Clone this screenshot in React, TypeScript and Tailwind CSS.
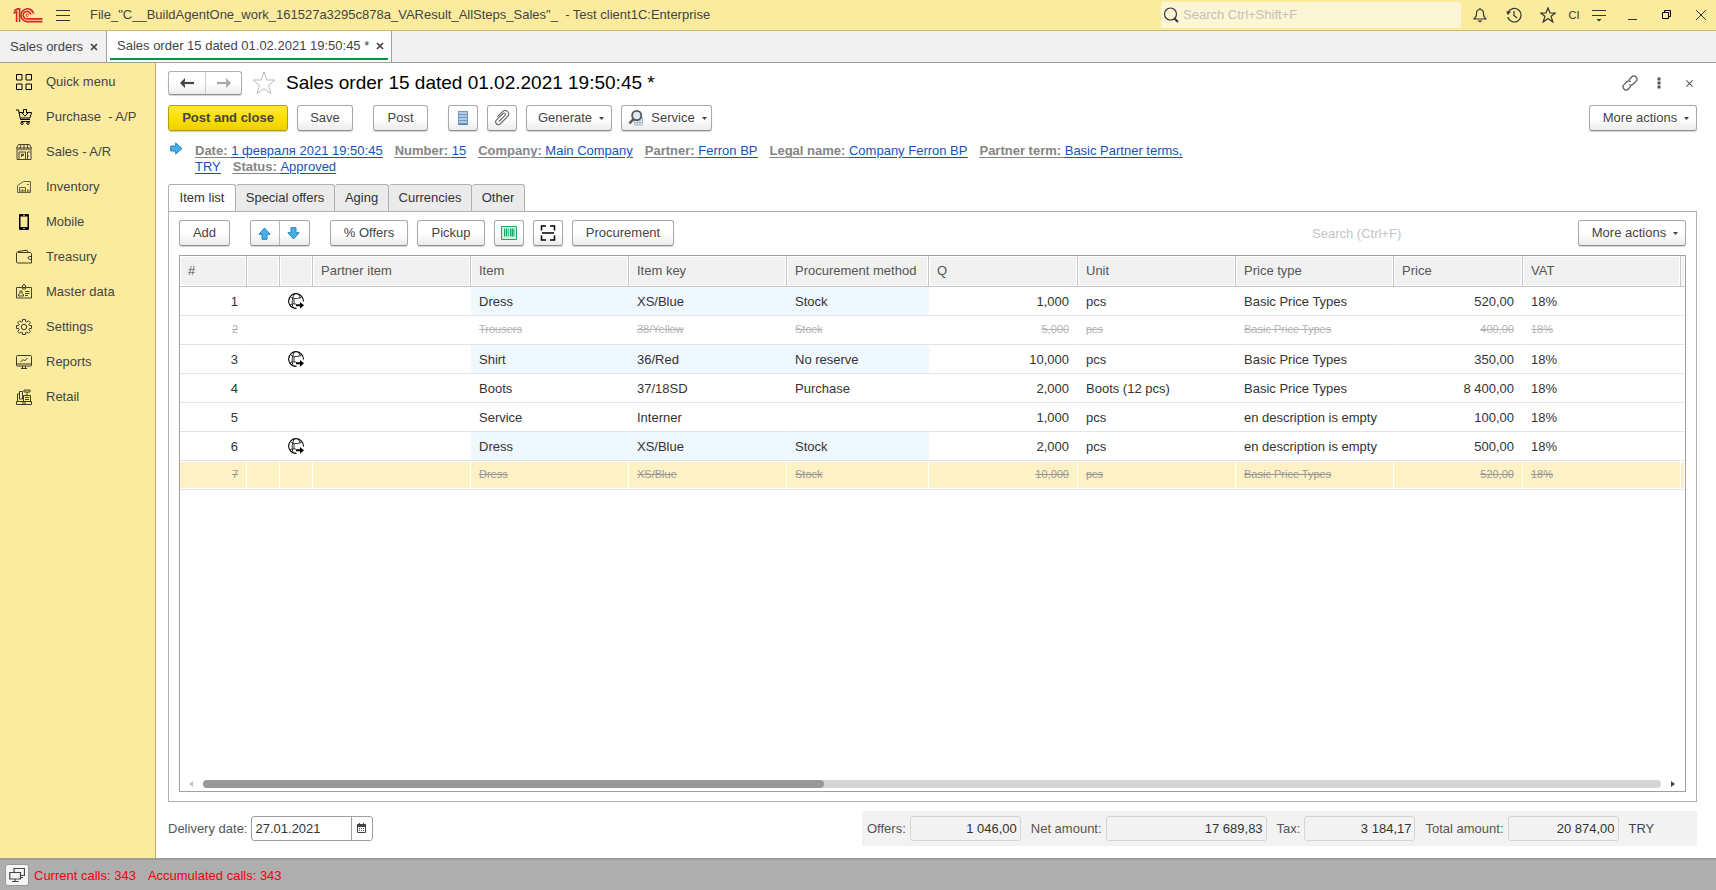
import type { ReactNode } from "react";

type IconProps = { children: ReactNode; className?: string; box?: string };

function Icon({ children, className = "size-4", box = "0 0 16 16" }: IconProps) {
  return (
    <svg
      viewBox={box}
      className={`${className} shrink-0`}
      fill="none"
      stroke="currentColor"
      strokeWidth="1"
      aria-hidden="true"
    >
      {children}
    </svg>
  );
}

function Logo() {
  return (
    <Icon box="0 0 30 15" className="h-[15px] w-[30px] text-[#dd2025]">
      <g strokeWidth="1.6">
        <path d="M0.5 5.2 3.6 3.4V14" />
        <path d="M1 2.6 4.6 0.9H6.6V14" />
        <path d="M20.6 5.6A6.4 6.4 0 1 0 14.8 13.6H29.5" />
        <path d="M17.8 6.4A3.8 3.8 0 1 0 14.8 10.9H29.5" />
        <path d="M16 7.2A1.4 1.4 0 1 0 14.8 8.6" strokeWidth="1" />
      </g>
    </Icon>
  );
}

const sections: { label: string; icon: ReactNode }[] = [
  {
    label: "Quick menu",
    icon: (
      <Icon className="size-4 text-black">
        <path d="M.5.5h5.500v5.500H.5zM10 .5h5.500v5.500H10zM.5 10h5.500v5.500H.5zM10 10h5.500v5.500H10z" />
      </Icon>
    ),
  },
  {
    label: "Purchase\u00a0 - A/P",
    icon: (
      <Icon className="size-4 text-black">
        <path d="M0 1h2.500l2 9.500h9.500M3 3.500h3.500M10.500 3.500H15.500L14 9H4.500M5 12.500h9" />
        <path d="M7.500.5h3v3.500h1.500L9 7.200 6 4h1.500z" />
        <circle cx="6" cy="14.200" r="1.200" />
        <circle cx="12" cy="14.200" r="1.200" />
      </Icon>
    ),
  },
  {
    label: "Sales - A/R",
    icon: (
      <Icon className="size-4 text-[#4a4530]">
        <path d="M2.500.5h11l2 3.500H.5zM5 .5 4.200 4M8 .5V4M11 .5l.8 3.500" />
        <path d="M.5 4c0 2.400 3.700 2.400 3.700 0 0 2.400 3.800 2.400 3.800 0 0 2.400 3.800 2.400 3.800 0 0 2.400 3.700 2.400 3.700 0" />
        <path d="M1 5.500v10h14v-10M3 8h6.500v7.500M3 8v7.500M11.500 15.500V8H14M5.500 13v-3h2v1.500h-2M12 12h1" />
      </Icon>
    ),
  },
  {
    label: "Inventory",
    icon: (
      <Icon className="size-4 text-[#6b6440]">
        <path d="M1.500 13.500v-7l6-4h7v11zM3.500 13.500V8.500h6v5M5 13.500v-3M6.500 13.500v-3M8 13.500v-3M11 5.500h2M11.500 13.500v-3M13 13.500v-3" />
      </Icon>
    ),
  },
  {
    label: "Mobile",
    icon: (
      <Icon className="size-4 text-black">
        <rect x="3" y="0" width="10" height="16" rx="1" fill="currentColor" stroke="none" />
        <path d="M4.500 2.500h7v10.500h-7z" fill="#fbeb9e" stroke="none" />
        <path d="M7 1.200h2M7 14.500h2" stroke="#fbeb9e" strokeWidth=".8" />
      </Icon>
    ),
  },
  {
    label: "Treasury",
    icon: (
      <Icon className="size-4 text-[#3d3a28]">
        <path d="M2 3.500h12.500l1 1v9.500H1.500l-1-1V3.800C1 3 2 2.500 3 2.300L11 1.200l1 2" />
        <path d="M15.500 7.500h-2a1.300 1.300 0 0 0 0 2.800h2" />
      </Icon>
    ),
  },
  {
    label: "Master data",
    icon: (
      <Icon className="size-4 text-[#4a4530]">
        <path d="M.5 3.500h15v10.500H.5zM6.500 3.500V2a1.500 1.500 0 0 1 3 0v3h-3zM9 7.500h4.500M9 9.500h4.500M9 11.500h3" />
        <path d="M2.500 12V10.500L4 9.500V7h2v2.500l1.500 1V12z" />
      </Icon>
    ),
  },
  {
    label: "Settings",
    icon: (
      <Icon className="size-4 text-[#3d3a28]">
        <path
          d="M6.500 2.500V.5h3v2l1.300.6 1.500-1.400 2.100 2.100-1.500 1.500.6 1.200h2v3h-2l-.6 1.300 1.500 1.500-2.100 2.100-1.500-1.500-1.300.6v2h-3v-2l-1.200-.6-1.500 1.500-2.100-2.100 1.500-1.500-.7-1.300h-2v-3h2l.7-1.200-1.500-1.500 2.100-2.100 1.500 1.400z"
          strokeLinejoin="round"
        />
        <circle cx="8" cy="8" r="2.700" />
      </Icon>
    ),
  },
  {
    label: "Reports",
    icon: (
      <Icon className="size-4 text-[#3d3a28]">
        <rect x=".5" y="1.500" width="15" height="10.500" rx="1" />
        <path d="M.5 10h15M4.500 8 7 5.500l1.500 1.500 3-3M6.500 12v2M9.500 12v2M5 14.500h6" />
      </Icon>
    ),
  },
  {
    label: "Retail",
    icon: (
      <Icon className="size-4 text-[#3d3a28]">
        <path d="M.5 12.500h15v3H.5zM1.500 12.500V5h2M3.500 2.500h3v7.500h-3zM7.500 12.500V6.500h7v6M8 1h6v2H8zM11 3v3.500M9 8.500h4M9 10.500h4M6 14h4" />
      </Icon>
    ),
  },
];

const btn =
  "flex h-[26px] shrink-0 items-center justify-center rounded-[3px] border border-[#a9a9a9] border-b-[#8f8f8f] bg-linear-to-b from-white from-50% to-[#ececec] text-[#444] shadow-[0_1px_1px_rgba(0,0,0,0.18)]";

function Caret() {
  return (
    <Icon box="0 0 5 3" className="mt-px h-[3px] w-[5px]">
      <path d="M0 0h5L2.500 3z" fill="currentColor" stroke="none" />
    </Icon>
  );
}

function MoreActions() {
  return (
    <button className={`${btn} w-[108px] gap-[7px] pl-[6px]`}>
      More actions
      <Caret />
    </button>
  );
}

function Arrow({ className }: { className: string }) {
  return (
    <Icon box="0 0 13 13" className={`size-[13px] ${className}`}>
      <path d="M.7 4h5V.9L12 6.500 5.700 12.100V9h-5z" fill="#45b0ee" stroke="#2c7fb2" strokeLinejoin="round" />
    </Icon>
  );
}

function Globe() {
  return (
    <Icon className="mx-auto size-4 text-black">
      <path d="M8.500 15.400A7.400 7.400 0 1 1 15.400 8.500" strokeWidth="1.100" />
      <path
        d="M4.800 13.800C3.600 10.500 4 5 6.300.9M10 .9c1.200 1.300 2 2.700 2.300 4.300M2.300 3.600C4 5.200 6 5.500 8.200 5.500c2.300 0 4-.5 5.500-1.700M1.700 12.200c1.500-1 2.500-1.200 4-1.200M6 5.500V11h2"
        strokeWidth=".8"
      />
      <path d="M8 11.200h4V8.900l4 3.400-4 3.400v-2.400H8z" fill="currentColor" stroke="none" />
    </Icon>
  );
}

const links = [
  { name: "Date: ", value: "1 февраля 2021 19:50:45" },
  { name: "Number: ", value: "15" },
  { name: "Company: ", value: "Main Company" },
  { name: "Partner: ", value: "Ferron BP" },
  { name: "Legal name: ", value: "Company Ferron BP" },
  { name: "Partner term: ", value: "Basic Partner terms," },
  { name: "", value: "TRY" },
  { name: "Status: ", value: "Approved" },
];

const columns = [
  { title: "#", width: "w-[67px]", right: true },
  { title: "", width: "w-[33px]" },
  { title: "", width: "w-[33px]" },
  { title: "Partner item", width: "w-[158px]" },
  { title: "Item", width: "w-[158px]", tint: true },
  { title: "Item key", width: "w-[158px]", tint: true },
  { title: "Procurement method", width: "w-[142px]", tint: true },
  { title: "Q", width: "w-[149px]", right: true },
  { title: "Unit", width: "w-[158px]" },
  { title: "Price type", width: "w-[158px]" },
  { title: "Price", width: "w-[129px]", right: true },
  { title: "VAT", width: "w-[158px]" },
  { title: "", width: "" },
];

type Row = { cells: string[]; linked?: boolean; cancelled?: boolean; selected?: boolean };

const rows: Row[] = [
  { cells: ["1", "Dress", "XS/Blue", "Stock", "1,000", "pcs", "Basic Price Types", "520,00"], linked: true },
  { cells: ["2", "Trousers", "38/Yellow", "Stock", "5,000", "pcs", "Basic Price Types", "400,00"], cancelled: true },
  { cells: ["3", "Shirt", "36/Red", "No reserve", "10,000", "pcs", "Basic Price Types", "350,00"], linked: true },
  { cells: ["4", "Boots", "37/18SD", "Purchase", "2,000", "Boots (12 pcs)", "Basic Price Types", "8 400,00"] },
  { cells: ["5", "Service", "Interner", "", "1,000", "pcs", "en description is empty", "100,00"] },
  { cells: ["6", "Dress", "XS/Blue", "Stock", "2,000", "pcs", "en description is empty", "500,00"], linked: true },
  {
    cells: ["7", "Dress", "XS/Blue", "Stock", "10,000", "pcs", "Basic Price Types", "520,00"],
    cancelled: true,
    selected: true,
  },
];

function ItemRow({ row }: { row: Row }) {
  const [num, ...rest] = row.cells;
  const values: ReactNode[] = [num, "", row.linked ? <Globe /> : "", "", ...rest, "18%", ""];
  const tone = row.cancelled
    ? `text-[11px] line-through ${row.selected ? "text-[#999]" : "text-[#b4b4b4]"}`
    : "text-[#333]";
  const pad = row.cancelled ? "px-2 pt-0 pb-[2px]" : "px-2 pt-[2px] pb-0";
  const fill = row.selected
    ? "bg-[#fdf1c5] border-r border-r-white shadow-[inset_0_1px_white,inset_0_-1px_white]"
    : "border-r border-r-transparent";
  return (
    <tr className={`h-[29px] ${tone}`}>
      {values.map((value, i) => {
        const col = columns[i];
        return (
          <td
            key={i}
            className={`border-b border-b-[#e3e3e3] whitespace-nowrap ${fill} ${i === 2 || i === 12 ? "p-0" : pad} ${
              col.right ? "text-right" : ""
            } ${row.linked && col.tint ? "bg-[#eff7ff]" : ""}`}
          >
            {value}
          </td>
        );
      })}
    </tr>
  );
}

function Total({ label, value, width, id }: { label: string; value: string; width: string; id: string }) {
  return (
    <div className="flex items-center gap-1">
      <label htmlFor={id}>{label}</label>
      <input
        id={id}
        readOnly
        defaultValue={value}
        className={`${width} h-[25px] rounded-[3px] border border-[#d5d5d5] bg-transparent px-[3px] text-right text-[#333]`}
      />
    </div>
  );
}

function TitleBar() {
  return (
    <header className="flex h-[31px] shrink-0 items-center border-b border-[#cbbc6c] bg-[#fbeb9e] pr-[10px] pl-[13px] text-[#444]">
      <Logo />
      <button aria-label="Main menu" className="ml-[13px]">
        <Icon className="size-[14px] text-[#333]" box="0 0 14 14">
          <path d="M0 2.500h14M0 7.500h14M0 12.500h14" />
        </Icon>
      </button>
      <span className="ml-5 whitespace-pre">
        {'File_"C__BuildAgentOne_work_161527a3295c878a_VAResult_AllSteps_Sales"_  - Test client1C:Enterprise'}
      </span>
      <div className="ml-auto flex items-center text-[#333]">
        <label className="flex h-[26px] w-[300px] items-center gap-1 rounded-[3px] bg-[#fdf6d6] pl-[2px]">
          <Icon>
            <circle cx="7.500" cy="7" r="6" strokeWidth="1.200" />
            <path d="m11.500 11.500 3.500 3.500" strokeWidth="2" />
          </Icon>
          <input
            type="search"
            aria-label="Search"
            placeholder="Search Ctrl+Shift+F"
            className="min-w-0 flex-1 bg-transparent outline-none placeholder:text-[#c4c1b8]"
          />
        </label>
        <button aria-label="Notifications" className="ml-[11px]">
          <Icon>
            <path
              d="M8 1v1.500M8 2.500c-2.500 0-3.500 2-3.500 4 0 3-1 4.500-3 5.500h13c-2-1-3-2.500-3-5.500 0-2-1-4-3.500-4z"
              strokeWidth="1.200"
            />
            <path d="M5.500 13.500h5L8 15.500z" fill="currentColor" stroke="none" />
          </Icon>
        </button>
        <button aria-label="History" className="ml-[18px]">
          <Icon>
            <path d="M2 5.500A6.800 6.800 0 1 1 1.700 10M8 4v4.500l3 2.500" strokeWidth="1.200" />
            <path d="M0 4.500h5L2 8z" fill="currentColor" stroke="none" />
          </Icon>
        </button>
        <button aria-label="Favorites" className="ml-[18px]">
          <Icon>
            <path d="m8 1 2 5h5.300l-4.200 3.300L12.800 15 8 11.600 3.200 15l1.700-5.700L.7 6H6z" strokeWidth="1.200" />
          </Icon>
        </button>
        <span className="ml-[11px] w-[14px] text-center text-[11px]">CI</span>
        <button aria-label="Panel settings" className="ml-[10px]">
          <Icon>
            <path d="M1 3.500h14M1 8.500h14" />
            <path d="M5.500 12h5L8 14.500z" fill="currentColor" stroke="none" />
          </Icon>
        </button>
        <button aria-label="Minimize" className="ml-[21px]">
          <Icon box="0 0 10 10" className="size-[10px]">
            <path d="M0 9.500h9" />
          </Icon>
        </button>
        <button aria-label="Restore" className="ml-6">
          <Icon box="0 0 10 10" className="size-[10px] text-black">
            <path d="M.5 2.500h6v6h-6zM2.500 2.500v-2h6v6h-2" />
          </Icon>
        </button>
        <button aria-label="Close" className="ml-6">
          <Icon box="0 0 10 10" className="size-[10px]">
            <path d="m0 0 10 10M10 0 0 10" />
          </Icon>
        </button>
      </div>
    </header>
  );
}

function TabCross() {
  return (
    <Icon box="0 0 8 8" className="size-[8px] text-[#444]">
      <path d="m1 1 6 6M7 1 1 7" strokeWidth="1.700" />
    </Icon>
  );
}

function WindowTabs() {
  return (
    <div className="flex h-8 shrink-0 border-b border-[#a0a0a0] bg-[#f1f1f1] text-[#444]">
      <div className="flex w-[107px] items-center justify-between border-r border-[#a0a0a0] pr-2 pl-[10px]">
        <a href="#orders">Sales orders</a>
        <button aria-label="Close Sales orders">
          <TabCross />
        </button>
      </div>
      <div className="w-[285px] border-r border-[#a0a0a0] bg-white px-[3px] pb-[2px]">
        <div className="flex h-full items-center justify-between border-b-2 border-[#009646] pt-[3px] pr-1 pl-[7px]">
          <a href="#order">Sales order 15 dated 01.02.2021 19:50:45 *</a>
          <button aria-label="Close Sales order 15">
            <TabCross />
          </button>
        </div>
      </div>
    </div>
  );
}

function OrderHeading() {
  return (
    <div className="flex h-6 items-center">
      <div className="flex h-6 rounded-[3px] border border-[#b0b0b0] border-b-[#8f8f8f] bg-linear-to-b from-white from-50% to-[#ececec] shadow-[0_1px_1px_rgba(0,0,0,0.18)]">
        <button aria-label="Back" className="flex w-[37px] items-center justify-center border-r border-[#ccc] text-[#444]">
          <Icon box="0 0 14 10" className="h-[10px] w-[14px]">
            <path d="M3 5h11" strokeWidth="2.200" />
            <path d="M0 5 5 0v3L3.500 5 5 7v3z" fill="currentColor" stroke="none" />
          </Icon>
        </button>
        <button aria-label="Forward" className="flex w-[35px] items-center justify-center text-[#a8a8a8]">
          <Icon box="0 0 14 10" className="h-[10px] w-[14px]">
            <path d="M0 5h11" strokeWidth="2.200" />
            <path d="M14 5 9 0v3l1.500 2L9 7v3z" fill="currentColor" stroke="none" />
          </Icon>
        </button>
      </div>
      <button aria-label="Add to favorites" className="ml-[10px] text-[#b5bac0]">
        <Icon box="0 0 24 24" className="size-6">
          <path d="m12 1 2.800 8h8.200l-6.500 5.200 2.400 8.300L12 17.700l-6.900 4.800 2.400-8.300L1 9h8.200z" />
        </Icon>
      </button>
      <h1 className="ml-[10px] text-[19px] text-black">Sales order 15 dated 01.02.2021 19:50:45 *</h1>
      <div className="ml-auto flex items-center text-[#555]">
        <button aria-label="Get link">
          <Icon>
            <path
              d="M7 4.800 9.700 2a3 3 0 0 1 4.300 4.300L11 9.200A3 3 0 0 1 7.200 9.500M9 11.200 6.300 14A3 3 0 0 1 2 9.700l3-2.900a3 3 0 0 1 3.800-.3"
              strokeWidth="1.200"
            />
          </Icon>
        </button>
        <button aria-label="More" className="ml-[19px]">
          <Icon box="0 0 4 12" className="h-3 w-1">
            <path d="M.5.500h3v3h-3zM.5 4.500h3v3h-3zM.5 8.500h3v3h-3z" fill="currentColor" stroke="none" />
          </Icon>
        </button>
        <button aria-label="Close form" className="mr-1 ml-[25px]">
          <Icon box="0 0 8 8" className="size-[7px]">
            <path d="m.5.500 7 7M7.500.500l-7 7" strokeWidth="1.200" />
          </Icon>
        </button>
      </div>
    </div>
  );
}

function FormCommands() {
  return (
    <div className="mt-[10px] flex items-center gap-[9px]">
      <button className="flex h-[26px] w-[120px] items-center justify-center rounded-[3px] border border-[#b5a000] bg-linear-to-b from-[#ffe632] via-[#fde000] to-[#ecd000] font-bold text-[#444] shadow-[0_1px_1px_rgba(0,0,0,0.2)]">
        Post and close
      </button>
      <button className={`${btn} w-14`}>Save</button>
      <button className={`${btn} ml-[11px] w-[55px]`}>Post</button>
      <button aria-label="Document movements" className={`${btn} ml-[11px] w-[30px]`}>
        <Icon box="0 0 10 14" className="h-[14px] w-[10px]">
          <path d="M0 0h10v14H0z" fill="#6d9ac0" stroke="none" />
          <path d="M1 2h8M1 5h8M1 8h8M1 11h8" stroke="#c3dcef" strokeWidth="1.600" />
          <path d="M1 13.500h8" stroke="#4f7ea6" />
        </Icon>
      </button>
      <button aria-label="Attached files" className={`${btn} w-[30px]`}>
        <Icon className="size-4 text-[#666]">
          <path
            d="M5 11.500 11 5.300a1.300 1.300 0 0 0-1.900-1.800L2.500 9.900a2.700 2.700 0 0 0 3.800 3.900l7.300-7.300a3.500 3.500 0 0 0-5-4.900L3.500 6.700"
            strokeWidth="1.100"
          />
        </Icon>
      </button>
      <button className={`${btn} w-[86px] gap-[7px] pl-1`}>
        Generate
        <Caret />
      </button>
      <button className={`${btn} w-[91px] gap-[7px] pl-[2px]`}>
        <Icon className="size-4 text-[#555]">
          <path d="M6.500 7.500h8v7.500h-8zM6.500 10h8M6.500 12.500h8M9.200 8v7M12 8v7" stroke="#9db7cc" />
          <circle cx="8.700" cy="5.500" r="4.600" fill="#dbe9f5" strokeWidth="1.800" />
          <path d="M5.500 9 1.500 13.500" strokeWidth="2.600" />
        </Icon>
        Service
        <Caret />
      </button>
      <div className="ml-auto">
        <MoreActions />
      </div>
    </div>
  );
}

function ItemCommands() {
  return (
    <div className="flex items-center gap-[9px]">
      <button className={`${btn} w-[51px]`}>Add</button>
      <div className={`${btn} ml-[11px] w-[60px]`}>
        <button aria-label="Move up" className="flex h-full flex-1 items-center justify-center border-r border-[#b5b5b5] pr-px">
          <Arrow className="-rotate-90" />
        </button>
        <button aria-label="Move down" className="flex h-full flex-1 items-center justify-center pr-[2px]">
          <Arrow className="rotate-90" />
        </button>
      </div>
      <button className={`${btn} ml-[11px] w-[78px]`}>% Offers</button>
      <button className={`${btn} w-[68px]`}>Pickup</button>
      <button aria-label="Scan barcode" className={`${btn} w-[30px]`}>
        <Icon box="0 0 16 14" className="h-[14px] w-4 text-[#1fa463]">
          <path d="M.5.500h15v13H.5z" fill="#d9f2e5" />
          <path d="M3.500 2.500v8M9.500 2.500v8M13 2.500v8" />
          <path d="M5.500 2.500v8M11.300 2.500v8" strokeWidth="1.600" />
          <path d="M7.500 2.500v8" strokeWidth=".7" />
        </Icon>
      </button>
      <button aria-label="Scan" className={`${btn} w-[30px]`}>
        <Icon className="size-4 text-black">
          <path d="M1.500 5.500V1H6M10 1h4.500v4.500M14.500 10.500V15H10M6 15H1.500v-4.500M2 8h12" strokeWidth="1.500" />
        </Icon>
      </button>
      <button className={`${btn} w-[102px]`}>Procurement</button>
      <input
        type="search"
        aria-label="Search items"
        placeholder="Search (Ctrl+F)"
        className="ml-auto h-[26px] w-[257px] bg-transparent outline-none placeholder:text-[#c4c4c4]"
      />
      <MoreActions />
    </div>
  );
}

function ItemTable() {
  return (
    <div className="mt-[9px] flex min-h-0 flex-1 flex-col overflow-hidden border border-[#a0a0a0]">
      <table className="w-full table-fixed border-separate border-spacing-0">
        <thead>
          <tr className="h-[31px] text-left text-[#555]">
            {columns.map((col, i) => (
              <th
                key={i}
                className={`${col.width} border-b border-b-[#c6c6c6] bg-[#f1f1f1] font-normal whitespace-nowrap shadow-[inset_0_0_0_1px_white] ${
                  i === 12 ? "p-0" : "border-r border-r-[#c6c6c6] px-2 py-0"
                }`}
              >
                {col.title}
              </th>
            ))}
          </tr>
        </thead>
        <tbody>
          {rows.map((row) => (
            <ItemRow key={row.cells[0]} row={row} />
          ))}
        </tbody>
      </table>
      <div className="mt-auto flex h-[11px] items-start pr-[10px] pl-[9px]">
        <Icon box="0 0 4 6" className="mt-px h-[6px] w-1 text-[#c0c0c0]">
          <path d="M4 0v6L0 3z" fill="currentColor" stroke="none" />
        </Icon>
        <div className="mx-[10px] h-2 flex-1 rounded-full bg-[#d6d6d6]">
          <div className="h-full w-[42.6%] rounded-full bg-[#999]" />
        </div>
        <Icon box="0 0 4 6" className="mt-px h-[6px] w-1 text-[#444]">
          <path d="M0 0v6l4-3z" fill="currentColor" stroke="none" />
        </Icon>
      </div>
    </div>
  );
}

const formTabs = [
  { label: "Special offers", width: "w-[99px]" },
  { label: "Aging", width: "w-[54px]" },
  { label: "Currencies", width: "w-[83px]" },
  { label: "Other", width: "w-[53px]" },
];

export default function App() {
  return (
    <div className="flex h-screen flex-col overflow-hidden bg-white font-['Liberation_Sans',Arial,sans-serif] text-[13px] leading-4 text-[#444]">
      <TitleBar />
      <WindowTabs />
      <div className="flex min-h-0 flex-1">
        <nav className="w-[156px] shrink-0 border-r border-[#c0b060] bg-[#fbeb9e] pt-px">
          {sections.map((section) => (
            <a key={section.label} href="#section" className="flex h-[35px] items-center gap-[14px] pl-4">
              {section.icon}
              {section.label}
            </a>
          ))}
        </nav>
        <main className="flex min-w-0 flex-1 flex-col pt-2 pr-[19px] pb-3 pl-3">
          <OrderHeading />
          <FormCommands />
          <div className="mt-[11px] flex gap-3 pl-[2px]">
            <Arrow className="" />
            <div className="flex max-w-[1010px] flex-wrap gap-x-3 pt-px">
              {links.map(({ name, value }) => (
                <a key={value} href="#edit" className="whitespace-pre underline underline-offset-2">
                  {name && <span className="font-bold text-[#858585] underline underline-offset-2">{name}</span>}
                  <span className="text-[#1b50b5] underline underline-offset-2">{value}</span>
                </a>
              ))}
            </div>
          </div>
          <div role="tablist" className="mt-[9px] flex h-[27px] shrink-0">
            <button
              role="tab"
              aria-selected="true"
              className="-mb-px w-[68px] rounded-t-[3px] border border-b-0 border-[#b0b0b0] bg-white pb-px text-[#333]"
            >
              Item list
            </button>
            {formTabs.map((tab) => (
              <button
                key={tab.label}
                role="tab"
                aria-selected="false"
                className={`${tab.width} rounded-t-[3px] border border-b-0 border-l-0 border-[#b0b0b0] bg-[#ebebeb] text-[#333]`}
              >
                {tab.label}
              </button>
            ))}
          </div>
          <section className="flex min-h-0 flex-1 flex-col border border-[#b0b0b0] px-[10px] pt-2 pb-[9px]">
            <ItemCommands />
            <ItemTable />
          </section>
          <div className="mt-[9px] flex h-[35px] shrink-0 items-center justify-between text-[#555]">
            <div className="flex items-center gap-1">
              <label htmlFor="delivery">Delivery date:</label>
              <div className="flex h-[25px] w-[122px] rounded-[3px] border border-[#a0a0a0]">
                <input
                  id="delivery"
                  defaultValue="27.01.2021"
                  className="min-w-0 flex-1 bg-transparent px-[3px] text-[#333] outline-none"
                />
                <button
                  aria-label="Choose date"
                  className="flex w-[21px] items-center justify-center border-l border-[#a0a0a0] pr-px pb-[2px]"
                >
                  <Icon box="0 0 9 10" className="h-[10px] w-[9px] text-[#444]">
                    <path d="M.5 1.500h8v8h-8z" />
                    <path d="M0 1h9v3H0zM2 0h1v2H2zM6 0h1v2H6z" fill="currentColor" stroke="none" />
                    <path d="M2 5.500h5M2 7.500h5" strokeDasharray="1 1" />
                  </Icon>
                </button>
              </div>
            </div>
            <div className="flex h-full w-[835px] items-center gap-[10px] bg-[#f2f2f2] pl-[5px]">
              <Total id="offers" label="Offers:" value="1 046,00" width="w-[111px]" />
              <Total id="net" label="Net amount:" value="17 689,83" width="w-[161px]" />
              <Total id="tax" label="Tax:" value="3 184,17" width="w-[111px]" />
              <Total id="total" label="Total amount:" value="20 874,00" width="w-[111px]" />
              <span className="text-[#444]">TRY</span>
            </div>
          </div>
        </main>
      </div>
      <footer className="flex h-8 shrink-0 items-center border-t-2 border-[#9c9c9c] bg-[#aeaeae] pl-[5px] text-[#f2000c]">
        <button
          aria-label="Performance indicators"
          className="flex h-[22px] w-6 items-center justify-center rounded-[3px] border border-[#999] bg-[#f4f4f4] text-[#444]"
        >
          <Icon className="size-4">
            <path d="M5 5V1.500h10.500v7H12M.8 5.500h10.700v6.500H.8zM6 12v2.500M3 14.500h6.500M12 10.500h2" strokeWidth="1.200" />
          </Icon>
        </button>
        <span className="ml-[5px] pt-px">Current calls: 343</span>
        <span className="ml-3 pt-px">Accumulated calls: 343</span>
      </footer>
    </div>
  );
}
